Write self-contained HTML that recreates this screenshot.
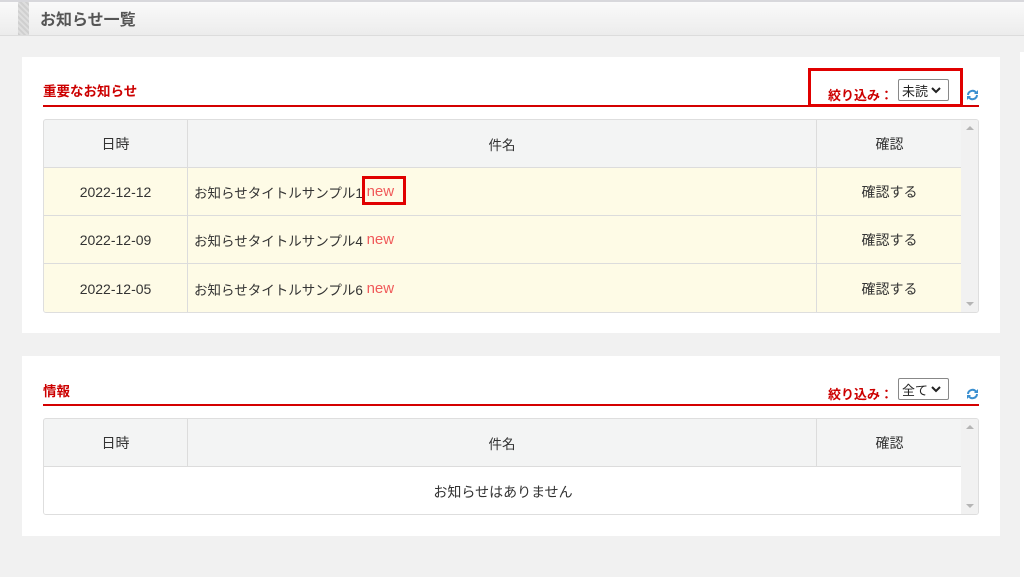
<!DOCTYPE html>
<html><head><meta charset="utf-8"><style>
*{margin:0;padding:0;box-sizing:border-box}
body{width:1024px;height:577px;background:#f1f1f1;font-family:"Liberation Sans","Noto Sans CJK JP",sans-serif;color:#333;position:relative;overflow:hidden;font-size:14px}
.a{position:absolute}
.hdr{left:0;top:0;width:1024px;height:36px;background:linear-gradient(#fafafa,#ececec);border-top:2px solid #d8d8dc;border-bottom:1px solid #dcdcdc}
.bar{left:18px;top:2px;width:11px;height:33px;background:repeating-linear-gradient(45deg,#cfcfcf 0 2px,#dedede 2px 4px)}
.ttl{left:40px;top:6px;font-size:16px;font-weight:bold;color:#555}
.panel{background:#fff}
.st{color:#cc0000;font-weight:bold;font-size:13.5px}
.rl{height:2px;background:#d40000}
.tbl{border:1px solid #dedede;border-radius:3px;background:#f3f4f4;overflow:hidden}
.row{position:absolute;left:0;width:918px;display:flex;border-top:1px solid #dcdcdc}
.row div{display:flex;align-items:center;justify-content:center}
.c1{width:144px;border-right:1px solid #dcdcdc}
.c2{width:629px;border-right:1px solid #dcdcdc;font-size:13.5px}
.c3{width:145px}
.sb{position:absolute;right:0;top:0;width:17px;height:100%;background:#f1f1f1}
.sb:before{content:"";position:absolute;left:5px;top:6px;border:4px solid transparent;border-bottom:4px solid #b5b5b5;border-top:0}
.sb:after{content:"";position:absolute;left:5px;bottom:6px;border:4px solid transparent;border-top:4px solid #b5b5b5;border-bottom:0}
.sel{border:1px solid #888;border-radius:2px;height:22px;font-size:13px;padding:1px 3px;background:#fff;color:#222;display:flex;align-items:center;gap:3px;white-space:nowrap;overflow:hidden}
.new{color:#f05a5a;font-size:15px}
.fl{color:#cc0000;font-weight:bold;font-size:13px}
</style></head><body>
<div class="a hdr"></div><div class="a bar"></div><div class="a ttl">お知らせ一覧</div>
<div class="a" style="left:1020px;top:52px;width:4px;height:525px;background:#fff"></div>

<div class="a panel" style="left:22px;top:57px;width:978px;height:276px"></div>
<div class="a st" style="left:43px;top:80px">重要なお知らせ</div>
<div class="a rl" style="left:43px;top:105px;width:936px"></div>
<div class="a fl" style="left:828px;top:85px">絞り込み：</div>
<div class="a sel" style="left:898px;top:79px;width:51px">未読<svg width="10" height="7" viewBox="0 0 10 7"><path d="M1 1l4 4 4-4" stroke="#222" stroke-width="2" fill="none"/></svg></div>
<div class="a" style="left:808px;top:68px;width:155px;height:39px;border:3px solid #e00000"></div>
<svg class="a" style="left:966px;top:89px" width="13" height="12" viewBox="0 0 13 12"><path d="M2 6a4.5 4.5 0 0 1 8-2.5M11 6a4.5 4.5 0 0 1-8 2.5" stroke="#3a8fd0" stroke-width="2" fill="none"/><path d="M12 1v4H8zM1 11V7h4z" fill="#3a8fd0"/></svg>

<div class="a tbl" style="left:43px;top:119px;width:936px;height:194px">
 <div class="row" style="top:0;height:48px;border-top:0"><div class="c1">日時</div><div class="c2">件名</div><div class="c3">確認</div></div>
 <div class="row" style="top:47px;height:48px;background:#fefbe6"><div class="c1">2022-12-12</div><div class="c2" style="justify-content:flex-start;padding-left:6px">お知らせタイトルサンプル1&nbsp;<span class="new">new</span></div><div class="c3">確認する</div></div>
 <div class="row" style="top:95px;height:48px;background:#fefbe6"><div class="c1">2022-12-09</div><div class="c2" style="justify-content:flex-start;padding-left:6px">お知らせタイトルサンプル4&nbsp;<span class="new">new</span></div><div class="c3">確認する</div></div>
 <div class="row" style="top:143px;height:50px;background:#fefbe6"><div class="c1">2022-12-05</div><div class="c2" style="justify-content:flex-start;padding-left:6px">お知らせタイトルサンプル6&nbsp;<span class="new">new</span></div><div class="c3">確認する</div></div>
 <div class="sb"></div>
</div>
<div class="a" style="left:362px;top:176px;width:44px;height:29px;border:3px solid #e00000"></div>

<div class="a panel" style="left:22px;top:356px;width:978px;height:180px"></div>
<div class="a st" style="left:43px;top:380px">情報</div>
<div class="a rl" style="left:43px;top:404px;width:936px"></div>
<div class="a fl" style="left:828px;top:384px">絞り込み：</div>
<div class="a sel" style="left:898px;top:378px;width:51px">全て<svg width="10" height="7" viewBox="0 0 10 7"><path d="M1 1l4 4 4-4" stroke="#222" stroke-width="2" fill="none"/></svg></div>
<svg class="a" style="left:966px;top:388px" width="13" height="12" viewBox="0 0 13 12"><path d="M2 6a4.5 4.5 0 0 1 8-2.5M11 6a4.5 4.5 0 0 1-8 2.5" stroke="#3a8fd0" stroke-width="2" fill="none"/><path d="M12 1v4H8zM1 11V7h4z" fill="#3a8fd0"/></svg>
<div class="a tbl" style="left:43px;top:418px;width:936px;height:97px">
 <div class="row" style="top:0;height:48px;border-top:0"><div class="c1">日時</div><div class="c2">件名</div><div class="c3">確認</div></div>
 <div class="row" style="top:47px;height:50px;background:#fff"><div style="width:918px">お知らせはありません</div></div>
 <div class="sb"></div>
</div>
</body></html>
